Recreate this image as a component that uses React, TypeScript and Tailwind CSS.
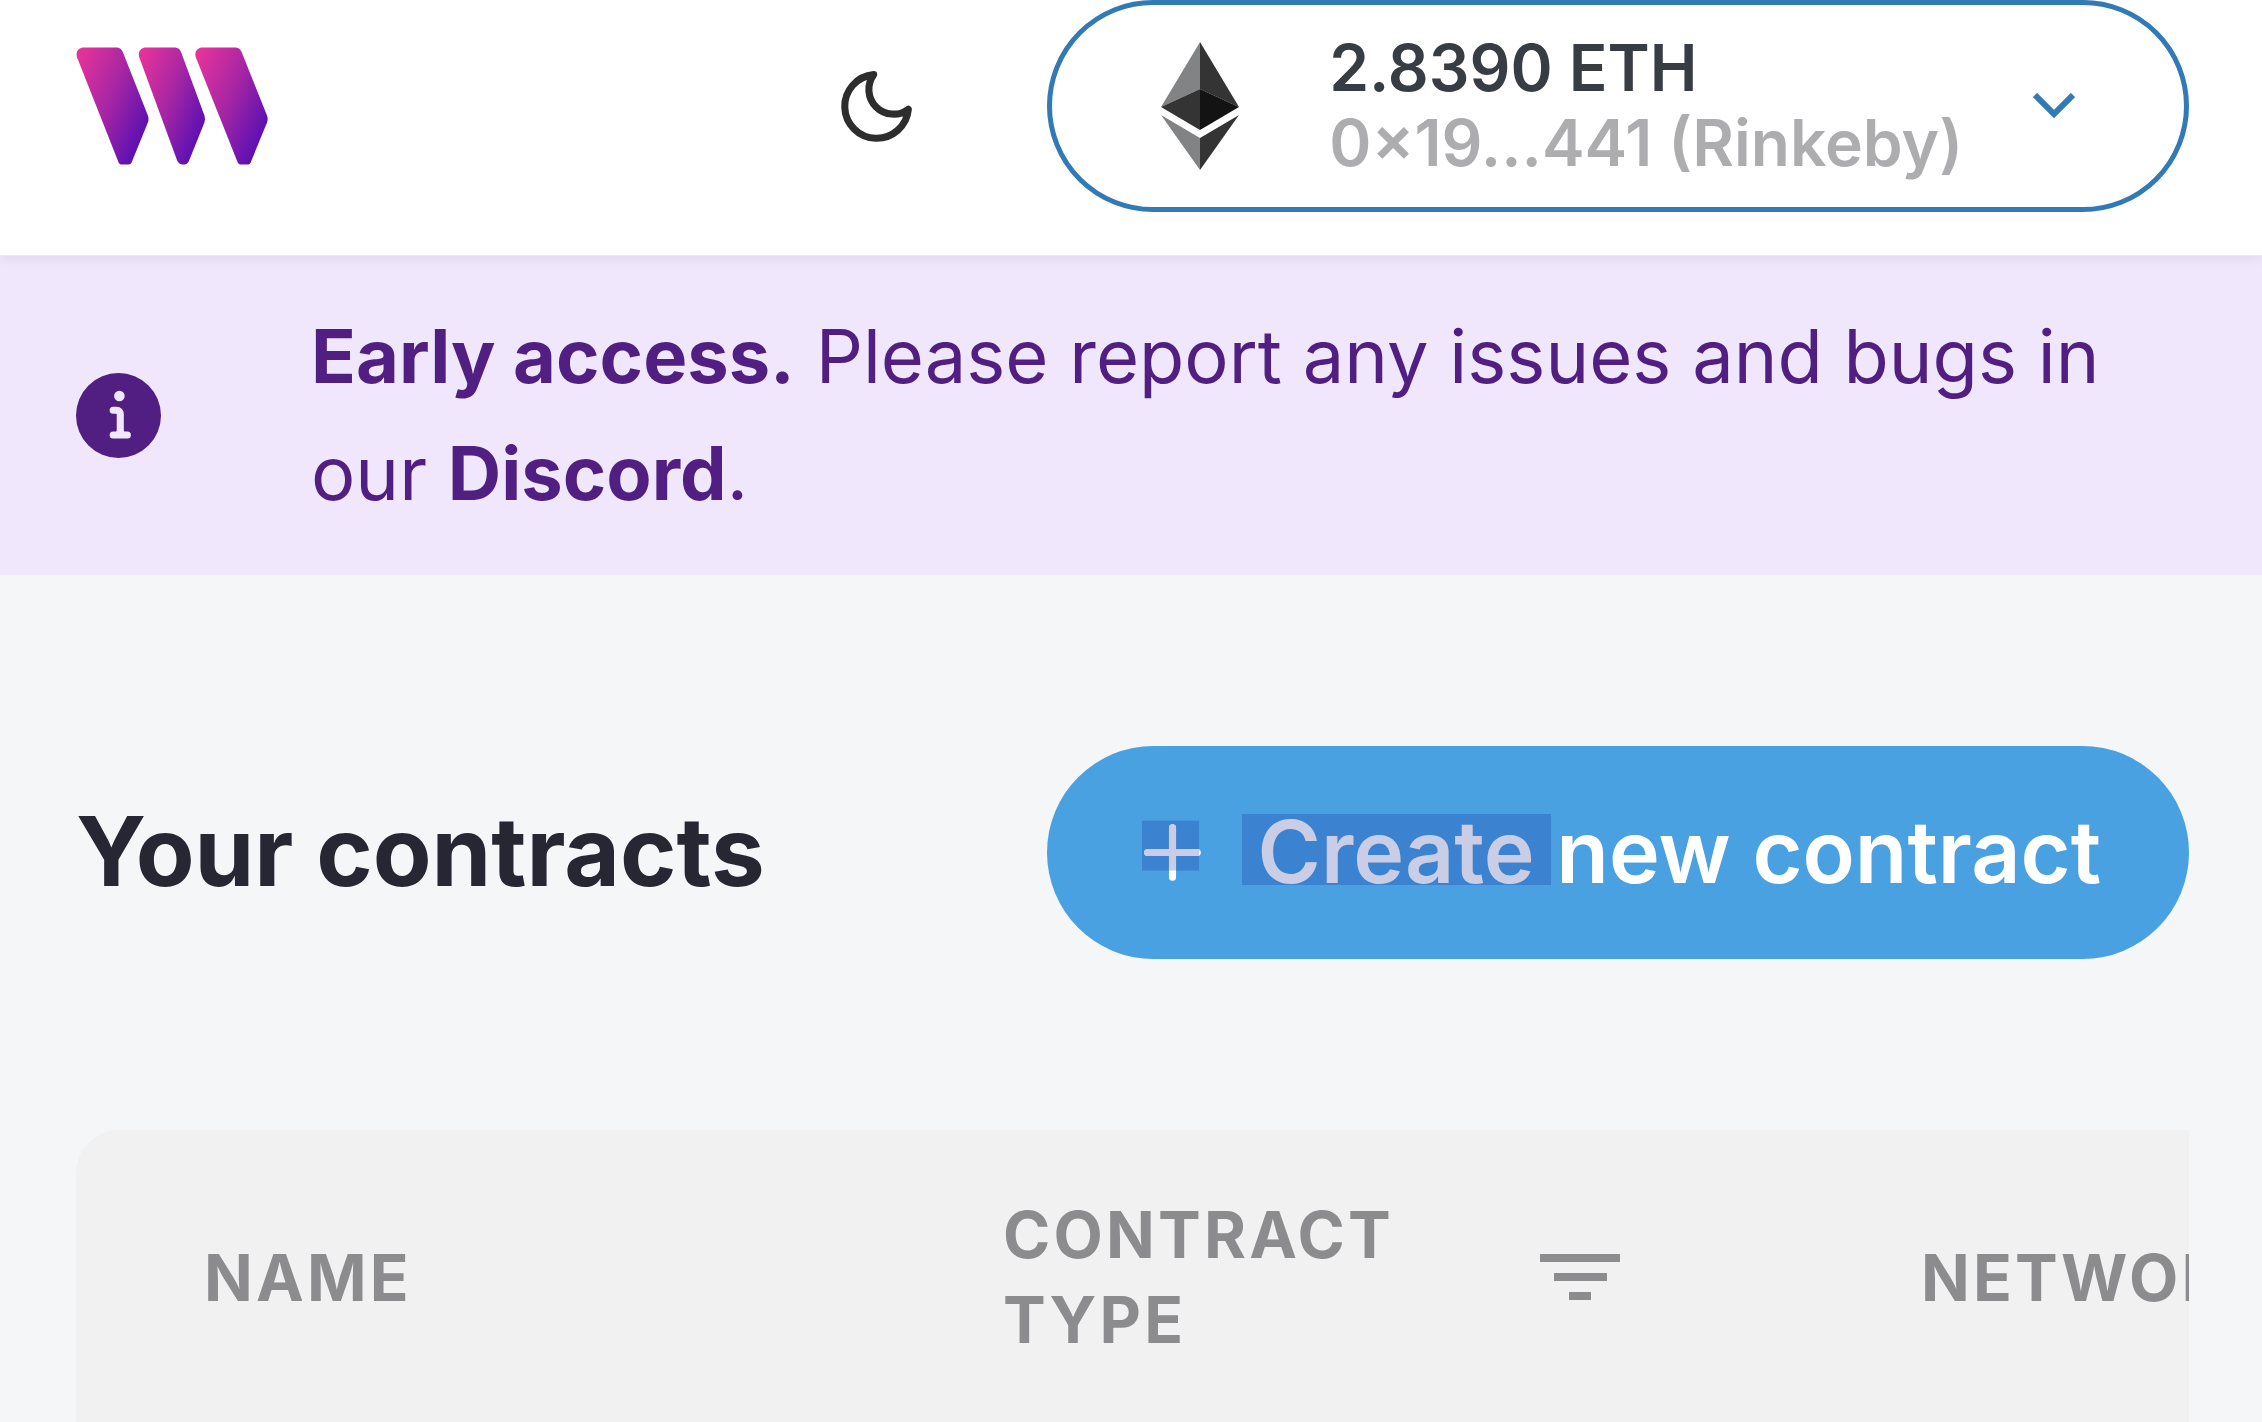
import React from "react";

function Logo() {
  return (
    <svg viewBox="79 81 577 353" className="h-[118px] w-48" role="img" aria-label="thirdweb">
      <defs>
        <linearGradient id="bar" x1="0.05" y1="0.08" x2="0.95" y2="0.72">
          <stop offset="0" stopColor="#e3329b" />
          <stop offset="0.5" stopColor="#a626a4" />
          <stop offset="1" stopColor="#5c10b2" />
        </linearGradient>
      </defs>
      <g fill="url(#bar)">
        <path d="M98 82H203Q214 83 220 96L295 286Q299 297 295 307L246 427Q243 433 238 433H214Q210 433 207 427L82 111Q76 88 98 82Z" />
        <path d="M285 82H377Q390 83 395 96L465 286Q469 297 465 307L419 421Q414 433 405 433H397Q388 432 383 421L269 111Q263 88 285 82Z" />
        <path d="M455 82H560Q571 83 577 96L653 286Q657 297 653 307L604 427Q601 433 597 433H573Q568 433 565 427L439 111Q433 88 455 82Z" />
      </g>
    </svg>
  );
}

function MoonIcon() {
  return (
    <svg viewBox="0 0 24 24" className="size-[85px]" fill="none" stroke="currentColor" strokeWidth="2" strokeLinecap="round" strokeLinejoin="round" aria-hidden="true">
      <path d="M21 12.79A9 9 0 1 1 11.21 3 7 7 0 0 0 21 12.79z" />
    </svg>
  );
}

function EthIcon() {
  return (
    <svg viewBox="0 0 78 128" className="h-32 w-[78px] shrink-0" aria-hidden="true">
      <path fill="#828384" d="M39 0L0 65L39 47Z" />
      <path fill="#343434" d="M39 0L78 65L39 47Z" />
      <path fill="#343434" d="M0 65L39 47V88Z" />
      <path fill="#131313" d="M78 65L39 47V88Z" />
      <path fill="#828384" d="M0 73L39 96V128Z" />
      <path fill="#343434" d="M78 73L39 96V128Z" />
    </svg>
  );
}

function ChevronIcon() {
  return (
    <svg viewBox="0 0 42 26" className="h-[26px] w-[42px] shrink-0" fill="none" stroke="#327ab5" strokeWidth="6" aria-hidden="true">
      <path d="M2 2L21 21L40 2" />
    </svg>
  );
}

function InfoIcon() {
  return (
    <svg viewBox="0 0 24 24" className="size-[85px] shrink-0" fill="currentColor" aria-hidden="true">
      <path d="M12,0A12,12,0,1,0,24,12,12.013,12.013,0,0,0,12,0Zm.25,5a1.5,1.5,0,1,1-1.5,1.5A1.5,1.5,0,0,1,12.25,5ZM14.5,18.5h-4a1,1,0,0,1,0-2h.75a.25.25,0,0,0,.25-.25v-4.5a.25.25,0,0,0-.25-.25H10.5a1,1,0,0,1,0-2h1a2,2,0,0,1,2,2v4.75a.25.25,0,0,0,.25.25h.75a1,1,0,1,1,0,2Z" />
    </svg>
  );
}

function PlusIcon() {
  return (
    <svg viewBox="0 0 24 24" className="size-[85px] shrink-0" fill="none" strokeWidth="2" strokeLinecap="round" aria-hidden="true">
      <defs>
        <clipPath id="selected">
          <rect x="3.4" y="3" width="16.1" height="14.1" />
        </clipPath>
      </defs>
      <rect x="3.4" y="3" width="16.1" height="14.1" fill="#3b82d0" />
      <path d="M12 5V19M5 12H19" stroke="#fff" />
      <path d="M12 5V19M5 12H19" stroke="#c9cde6" clipPath="url(#selected)" />
    </svg>
  );
}

function FilterIcon() {
  return (
    <svg viewBox="0 0 80 46" className="h-[46px] w-20" fill="currentColor" aria-hidden="true">
      <path d="M0 0H80V8H0ZM14 19H67V27H14ZM29 38H51V46H29Z" />
    </svg>
  );
}

export default function App() {
  return (
    <div className="min-h-screen overflow-hidden bg-[#f5f6f8] font-['Inter',sans-serif]">
      <header className="relative z-10 flex items-center justify-between border-b border-[#ece8f1] bg-white pr-[73px] pb-[43px] pl-[76px] shadow-[0_3px_12px_rgba(0,0,0,0.07)]">
        <a href="#home">
          <Logo />
        </a>
        <div className="flex items-center gap-32">
          <button type="button" aria-label="Toggle dark mode" className="text-[#2d2d2d]">
            <MoonIcon />
          </button>
          <button type="button" className="flex h-[212px] items-center rounded-full border-5 border-[#327ab5] px-[109px] text-left text-[64px] leading-[75px] font-semibold">
            <EthIcon />
            <span className="mr-[70px] ml-[90px] flex flex-col pb-[3px] whitespace-nowrap">
              <span className="text-[#383c43]">2.8390 ETH</span>
              <span className="text-[#adadb0]">0×19...441 (Rinkeby)</span>
            </span>
            <ChevronIcon />
          </button>
        </div>
      </header>

      <div role="status" className="flex items-center gap-[150px] bg-[#f1e7fd] pt-[42px] pr-[73px] pb-[43px] pl-[76px] text-[#501f81]">
        <InfoIcon />
        <p className="text-[74px] leading-[117px] font-normal">
          <strong className="font-bold">Early access.</strong> Please report any issues and bugs in our{" "}
          <a href="#discord" className="font-bold">Discord</a>.
        </p>
      </div>

      <main className="pt-[171px] pr-[73px] pl-[76px]">
        <div className="flex items-center justify-between">
          <h1 className="pb-1 text-[96px] leading-[128px] font-bold text-[#272733]">Your contracts</h1>
          <button type="button" className="flex h-[213px] items-center gap-[43px] rounded-full bg-[#4aa1e1] pr-[88px] pl-[83px] text-[86px] font-semibold whitespace-nowrap text-white">
            <PlusIcon />
            <span>
              <span className="relative isolate text-[#c9cde6]">
                <span className="absolute -inset-x-4 top-[14px] bottom-[19px] -z-10 bg-[#3b82d0]" />
                Create
              </span>{" "}
              new contract
            </span>
          </button>
        </div>

        <div className="mt-[171px] overflow-hidden rounded-tl-[43px]">
          <table className="w-[2900px] table-fixed bg-[#f1f1f1] text-left text-[64px] leading-[85px] tracking-wider text-[#8c8c8f]">
            <thead>
              <tr>
                <th scope="col" className="w-[799px] px-32 pt-[62px] pb-16 font-bold">NAME</th>
                <th scope="col" className="w-[918px] px-32 pt-[62px] pb-16 font-bold">
                  <div className="flex items-center">
                    <span className="w-[537px]">CONTRACT<br />TYPE</span>
                    <button type="button" aria-label="Filter by contract type">
                      <FilterIcon />
                    </button>
                  </div>
                </th>
                <th scope="col" className="px-32 pt-[62px] pb-16 font-bold">NETWORK</th>
              </tr>
            </thead>
          </table>
        </div>
      </main>
    </div>
  );
}
